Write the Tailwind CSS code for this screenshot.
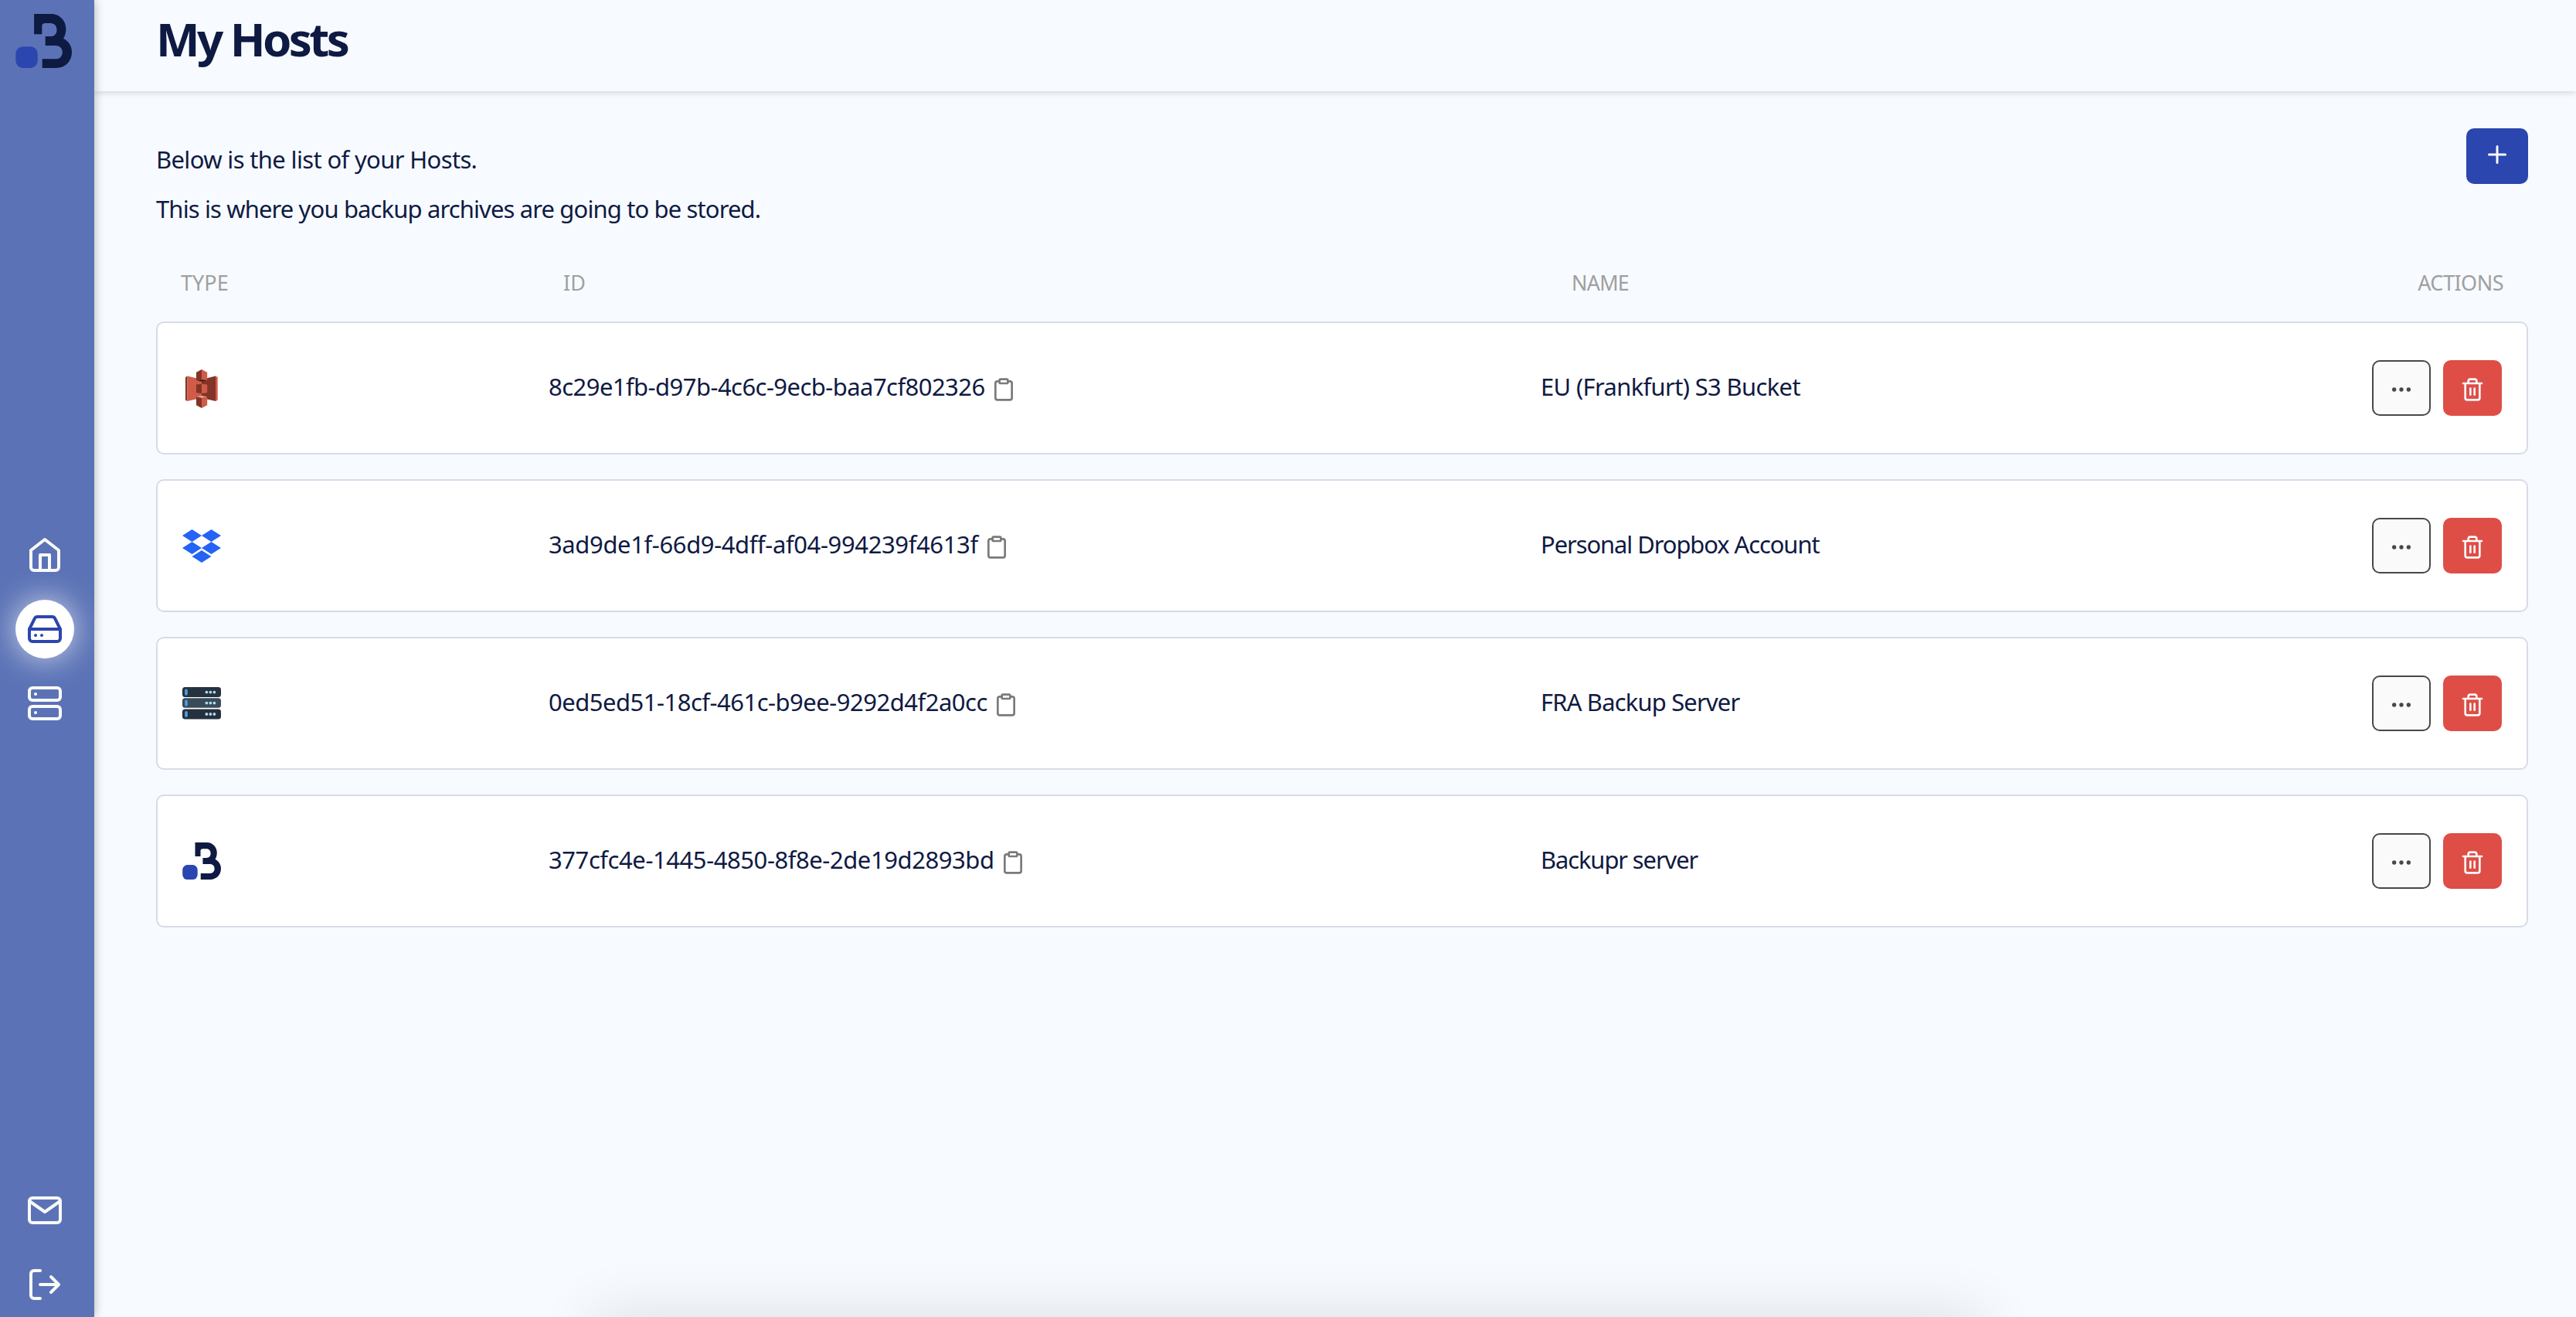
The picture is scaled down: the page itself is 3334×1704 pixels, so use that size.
<!DOCTYPE html>
<html lang="en">
<head>
    <meta charset="UTF-8">
    <meta name="viewport" content="width=device-width, initial-scale=1.0">
    <title>My Hosts</title>
    <script src="https://cdn.jsdelivr.net/npm/@tailwindcss/browser@4"></script>
</head>
<body class="flex h-screen overflow-hidden bg-[#f7fbff] font-['Noto_Sans',sans-serif] text-[#0f1a43]">
    <!-- logo shared by the sidebar and the last row -->
    <svg class="hidden">
        <symbol id="logo" viewBox="60 54 221 210" preserveAspectRatio="none">
            <rect x="61" y="181" width="86" height="83" rx="28" fill="#2b46ae" />
            <path fill="#0f1a43" d="M133 54H200C235 54 258 82 258 112C258 128 254 140 248 149C268 160 281 178 281 202C281 238 255 264 220 264H165V229H218C234 229 244 217 244 203C244 188 234 177 218 177H177V141H198C213 141 222 131 222 116C222 101 213 90 198 90H176C168 90 164 94 164 101V133H133Z" />
        </symbol>
    </svg>

    <aside class="relative z-10 flex w-[122px] shrink-0 flex-col bg-[#5b73b6] pt-[18px] pb-[18px] shadow-[0_0_12px_rgba(0,0,0,0.3)]">
        <svg class="ml-5 h-[70px] w-[73px]"><use href="#logo" /></svg>
        <nav class="mt-[592px] ml-5 flex w-[76px] flex-col items-center gap-5 text-[#fafafa]">
            <a class="flex size-[76px] items-center justify-center">
                <svg class="size-12" viewBox="0 0 24 24" fill="none" stroke="currentColor" stroke-width="2" stroke-linecap="round" stroke-linejoin="round"><path d="m3 9 9-7 9 7v11a2 2 0 0 1-2 2H5a2 2 0 0 1-2-2z" /><path d="M9 22V12h6v10" /></svg>
            </a>
            <a class="flex size-[76px] items-center justify-center rounded-full bg-white text-[#2b46ae] shadow-[0_0_40px_rgba(255,255,255,0.75)]">
                <svg class="size-12" viewBox="0 0 24 24" fill="none" stroke="currentColor" stroke-width="2" stroke-linecap="round" stroke-linejoin="round"><path d="M22 12H2" /><path d="M5.45 5.11 2 12v6a2 2 0 0 0 2 2h16a2 2 0 0 0 2-2v-6l-3.45-6.89A2 2 0 0 0 16.76 4H7.24a2 2 0 0 0-1.79 1.11z" /><path d="M6 16h.01M10 16h.01" /></svg>
            </a>
            <a class="flex size-[76px] items-center justify-center">
                <svg class="size-12" viewBox="0 0 24 24" fill="none" stroke="currentColor" stroke-width="2" stroke-linecap="round" stroke-linejoin="round"><rect x="2" y="2" width="20" height="8" rx="2" /><rect x="2" y="14" width="20" height="8" rx="2" /><path d="M6 6h.01M6 18h.01" /></svg>
            </a>
        </nav>
        <div class="mt-auto ml-5 flex w-[76px] flex-col items-center gap-12 text-[#fafafa]">
            <svg class="size-12" viewBox="0 0 24 24" fill="none" stroke="currentColor" stroke-width="2" stroke-linecap="round" stroke-linejoin="round"><rect x="2" y="4" width="20" height="16" rx="2" /><path d="m22 6-10 7L2 6" /></svg>
            <svg class="size-12" viewBox="0 0 24 24" fill="none" stroke="currentColor" stroke-width="2" stroke-linecap="round" stroke-linejoin="round"><path d="M9 21H5a2 2 0 0 1-2-2V5a2 2 0 0 1 2-2h4" /><path d="m16 17 5-5-5-5M21 12H9" /></svg>
        </div>
    </aside>

    <div class="flex grow flex-col">
        <header class="h-[118px] pl-20 shadow-[0_2px_8px_rgba(0,0,0,0.14)]">
            <h1 class="w-fit text-[60px] leading-[100px] font-bold tracking-[-3.6px]">My Hosts</h1>
        </header>
        <main class="pt-12 pr-[62px] pl-20">
            <div class="flex items-start justify-between">
                <div class="pt-2 text-[31px] leading-[64px]">
                    <p class="tracking-[-0.65px]">Below is the list of your Hosts.</p>
                    <p class="tracking-[-0.88px]">This is where you backup archives are going to be stored.</p>
                </div>
                <button class="flex h-[72px] w-20 items-start justify-center rounded-[10px] bg-[#2b46ae] pt-4 text-[#fafafa]">
                    <svg class="size-9" viewBox="0 0 24 24" fill="none" stroke="currentColor" stroke-width="2" stroke-linecap="round"><path d="M12 5v14M5 12h14" /></svg>
                </button>
            </div>
            <div class="mt-[45px] grid grid-cols-[495px_1305px_1fr_auto] px-8 text-[27px] leading-[38px] text-[#a0a0a0]">
                <span>TYPE</span>
                <span>ID</span>
                <span class="tracking-[-0.8px]">NAME</span>
                <span class="tracking-[-0.5px]">ACTIONS</span>
            </div>
            <ul id="hosts" class="mt-[31px] flex flex-col gap-8"></ul>
        </main>
    </div>

    <div class="fixed top-full left-[768px] h-40 w-[1798px] shadow-[0_0_80px_rgba(0,0,0,0.12)]"></div>

    <script>
        const hostsDOM = document.querySelector("#hosts");

        const s3Icon = `
            <svg class="mt-[2px] size-[50px]" viewBox="0 0 50 50">
                <path fill="#823428" d="M4 10 6.5 8.5V41L4 39.7zM25 13 43 8.5V41L25 37z" />
                <path fill="#d05b49" d="M6.5 8.5 25 13V37L6.5 41zM43 8.5 45.7 10V39.7L43 41z" />
                <path fill="#823428" d="M18 19.5 25 18.8V31L18 30.3z" />
                <path fill="#d05b49" d="M25 18.8 32.2 19.5V30.3L25 31z" />
                <path fill="#5a2118" d="M18 14 25 12.8 32.2 14 25 16z" />
                <path fill="#823428" d="M25 0 18 3.8V14L25 12.8z" />
                <path fill="#d05b49" d="M25 0 32.2 3.8V14L25 12.8z" />
                <path fill="#e8a79d" d="M18 35.3 25 34 32.2 35.3 25 37z" />
                <path fill="#823428" d="M18 35.3 25 37V50L18 46.2z" />
                <path fill="#d05b49" d="M32.2 35.3 25 37V50L32.2 46.2z" />
            </svg>`;

        const dropboxIcon = `
            <svg class="h-[43px] w-[50px]" viewBox="0 0 50 43">
                <path fill="#2463f5" d="M12.5 0 25 8 12.5 16 0 8zM37.5 0 50 8 37.5 16 25 8zM12.5 16 25 24 12.5 32 0 24zM37.5 16 50 24 37.5 32 25 24zM25 27 37.5 35 25 43 12.5 35z" />
            </svg>`;

        const serverIcon = `
            <svg class="h-[42px] w-[50px]" viewBox="0 0 50 42">
                <rect width="50" height="13" rx="3.5" fill="#25323f" />
                <rect y="14.3" width="50" height="12.5" rx="3.5" fill="#394b59" />
                <rect y="28.6" width="50" height="12.9" rx="3.5" fill="#252f3e" />
                <path stroke="#4d9fe6" stroke-width="3.6" stroke-linecap="round" d="M5 4.3v4.6M5 18.3v4.6M5 32.7v4.6" />
                <path stroke="#a9dcee" stroke-width="3.8" stroke-linecap="round" d="M31.4 6.6h.01M36.4 6.6h.01M41.4 6.6h.01M31.4 20.6h.01M36.4 20.6h.01M41.4 20.6h.01M31.4 35h.01M36.4 35h.01M41.4 35h.01" />
            </svg>`;

        const backuprIcon = `<svg class="h-12 w-[50px]"><use href="#logo" /></svg>`;

        const hosts = [
            { icon: s3Icon, id: "8c29e1fb-d97b-4c6c-9ecb-baa7cf802326", idClass: "tracking-[-0.55px]", name: "EU (Frankfurt) S3 Bucket", nameClass: "tracking-[-0.67px]" },
            { icon: dropboxIcon, id: "3ad9de1f-66d9-4dff-af04-994239f4613f", idClass: "tracking-[-0.38px]", name: "Personal Dropbox Account", nameClass: "tracking-[-1.12px]" },
            { icon: serverIcon, id: "0ed5ed51-18cf-461c-b9ee-9292d4f2a0cc", idClass: "tracking-[-0.5px]", name: "FRA Backup Server", nameClass: "tracking-[-0.85px]" },
            { icon: backuprIcon, id: "377cfc4e-1445-4850-8f8e-2de19d2893bd", idClass: "tracking-[-0.43px]", name: "Backupr server", nameClass: "tracking-[-1.15px]" },
        ];

        function displayHosts() {
            let result = "";

            hosts.forEach((host) => {
                result += `
                <li class="grid h-[172px] grid-cols-[474px_1284px_1fr_auto] items-center rounded-[10px] border-2 border-[#d7dbe8] bg-white px-8 text-[31px]">
                    <div class="flex h-[50px] items-center">${host.icon}</div>
                    <div class="flex items-center gap-2">
                        <span class="pb-1 ${host.idClass}">${host.id}</span>
                        <svg class="mt-1 size-8 text-[#7a7a7a]" viewBox="0 0 24 24" fill="none" stroke="currentColor" stroke-width="2" stroke-linecap="round" stroke-linejoin="round"><path d="M16 4h2a2 2 0 0 1 2 2v14a2 2 0 0 1-2 2H6a2 2 0 0 1-2-2V6a2 2 0 0 1 2-2h2" /><rect x="8" y="2" width="8" height="4" rx="1" /></svg>
                    </div>
                    <span class="pb-1 ${host.nameClass}">${host.name}</span>
                    <div class="flex gap-4">
                        <button class="flex h-[72px] w-[76px] items-center justify-center rounded-[10px] border-2 border-[#484848] bg-[#fafafa] pt-1 text-[#484848]">
                            <svg class="size-8" viewBox="0 0 24 24" fill="currentColor"><circle cx="5" cy="12" r="2" /><circle cx="12" cy="12" r="2" /><circle cx="19" cy="12" r="2" /></svg>
                        </button>
                        <button class="flex h-[72px] w-[76px] items-center justify-center rounded-[10px] bg-[#de4e47] pt-1 text-[#fafafa]">
                            <svg class="size-8" viewBox="0 0 24 24" fill="none" stroke="currentColor" stroke-width="2" stroke-linecap="round" stroke-linejoin="round"><path d="M3 6h18M19 6v14a2 2 0 0 1-2 2H7a2 2 0 0 1-2-2V6m3 0V4a2 2 0 0 1 2-2h4a2 2 0 0 1 2 2v2M10 11v6M14 11v6" /></svg>
                        </button>
                    </div>
                </li>
                `;
            });

            hostsDOM.innerHTML = result;
        }

        displayHosts();
    </script>
</body>
</html>
